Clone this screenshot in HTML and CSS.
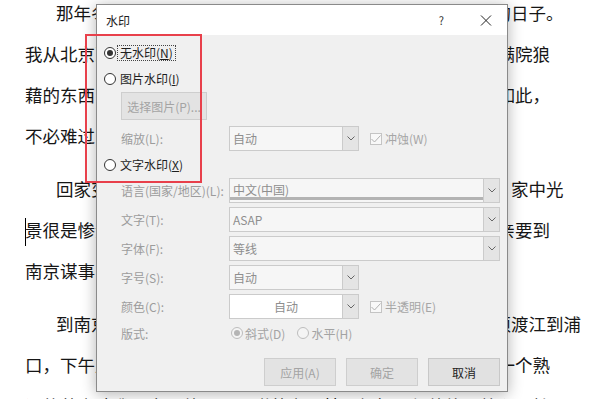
FILE: index.html
```html
<!DOCTYPE html>
<html lang="zh-CN">
<head>
<meta charset="utf-8">
<title>水印</title>
<link rel="stylesheet" href="styles.css">
</head>
<body>
<div class="doc">
  <div class="para">
    <div class="line indent">那年冬天，祖母死了，父亲的差使交卸了，正是祸不单行的日子。</div>
    <div class="line">我从北京到徐州，打算跟着父亲奔丧回家。到徐州见父亲，看满院狼</div>
    <div class="line">藉的东西，又想起祖母，不禁簌簌地流下眼泪。父亲说：事已如此，</div>
    <div class="line">不必难过，好在天无绝人之路！</div>
  </div>
  <div class="para">
    <div class="line indent">回家变卖典质，父亲还亏空；又借钱办了丧事。这些日子，家中光</div>
    <div class="line"><span class="cursor"></span>景很是惨淡，一半为了丧事，一半为父亲赋闲。丧事完毕，父亲要到</div>
    <div class="line">南京谋事，我也要回北京念书，我们便同行。</div>
  </div>
  <div class="para">
    <div class="line indent">到南京时，有朋友约去游逛，勾留了一日；第二日上午便须渡江到浦</div>
    <div class="line">口，下午上车北去。父亲因为事忙，本已说定不送我，叫旅馆一个熟</div>
    <div class="line">识的茶房陪我同去。他再三嘱咐茶房，甚是仔细。但他终不放心，怕</div>
  </div>
</div>

<div class="dialog">
  <div class="titlebar">
    <span class="title">水印</span>
    <span class="help">?</span>
    <span class="close"><svg width="12" height="11" viewBox="0 0 12 11"><path d="M1 0.5 L11 10.5 M11 0.5 L1 10.5" stroke="#222" stroke-width="1" fill="none"/></svg></span>
  </div>
  <div class="dbody">
    <div class="opt"><span class="radio on"></span><span class="txt focus">无水印(<u>N</u>)</span></div>
    <div class="opt"><span class="radio"></span><span class="txt">图片水印(<u>I</u>)</span></div>
    <div class="sub"><div class="btn pic">选择图片(P)...</div></div>
    <div class="row sub scale">
      <span class="lbl">缩放(L):</span>
      <div class="combo short"><span class="val">自动</span><span class="arrow"><svg width="8" height="5" viewBox="0 0 8 5"><path d="M0.5 0.5 L4 4 L7.5 0.5" stroke="#666" fill="none"/></svg></span></div>
      <span class="chk"><span class="box"><svg width="10" height="8" viewBox="0 0 10 8"><path d="M0.5 4 L3.5 7 L9.5 0.5" stroke="#b0b0b0" fill="none"/></svg></span>冲蚀(W)</span>
    </div>
    <div class="opt opt3"><span class="radio"></span><span class="txt">文字水印(<u>X</u>)</span></div>
    <div class="fields sub">
      <div class="row">
        <span class="lbl">语言(国家/地区)(L):</span>
        <div class="combo long"><span class="val bar">中文(中国)</span><span class="arrow"><svg width="8" height="5" viewBox="0 0 8 5"><path d="M0.5 0.5 L4 4 L7.5 0.5" stroke="#666" fill="none"/></svg></span></div>
      </div>
      <div class="row">
        <span class="lbl">文字(T):</span>
        <div class="combo long"><span class="val">ASAP</span><span class="arrow"><svg width="8" height="5" viewBox="0 0 8 5"><path d="M0.5 0.5 L4 4 L7.5 0.5" stroke="#666" fill="none"/></svg></span></div>
      </div>
      <div class="row">
        <span class="lbl">字体(F):</span>
        <div class="combo long"><span class="val">等线</span><span class="arrow"><svg width="8" height="5" viewBox="0 0 8 5"><path d="M0.5 0.5 L4 4 L7.5 0.5" stroke="#666" fill="none"/></svg></span></div>
      </div>
      <div class="row">
        <span class="lbl">字号(S):</span>
        <div class="combo short"><span class="val">自动</span><span class="arrow"><svg width="8" height="5" viewBox="0 0 8 5"><path d="M0.5 0.5 L4 4 L7.5 0.5" stroke="#666" fill="none"/></svg></span></div>
      </div>
      <div class="row">
        <span class="lbl">颜色(C):</span>
        <div class="combo short white"><span class="val center">自动</span><span class="arrow"><svg width="8" height="5" viewBox="0 0 8 5"><path d="M0.5 0.5 L4 4 L7.5 0.5" stroke="#666" fill="none"/></svg></span></div>
        <span class="chk"><span class="box"><svg width="10" height="8" viewBox="0 0 10 8"><path d="M0.5 4 L3.5 7 L9.5 0.5" stroke="#b0b0b0" fill="none"/></svg></span>半透明(E)</span>
      </div>
      <div class="row layout">
        <span class="lbl">版式:</span>
        <span class="radio dis on"></span><span class="rtxt">斜式(D)</span>
        <span class="radio dis second"></span><span class="rtxt">水平(H)</span>
      </div>
    </div>
    <div class="buttons">
      <div class="btn">应用(A)</div>
      <div class="btn">确定</div>
      <div class="btn primary">取消</div>
    </div>
  </div>
</div>
<div class="mark"></div>
</body>
</html>
```

FILE: styles.css
```css
* { box-sizing: border-box; }
html, body { margin: 0; padding: 0; }
body {
  width: 600px;
  height: 399px;
  overflow: hidden;
  background: #fff;
  position: relative;
  font-family: "Noto Sans CJK SC", "Noto Sans", sans-serif;
}

/* document text behind the dialog */
.doc {
  padding-left: 25px;
  margin-top: -8.5px;
  font-size: 17.5px;
  line-height: 41px;
  color: #161616;
}
.line { white-space: nowrap; }
.indent { padding-left: 31px; }
.para + .para { margin-top: 12px; }
.cursor {
  display: inline-block;
  width: 1px;
  height: 28px;
  background: #000;
  vertical-align: middle;
  margin-right: -1px;
}

/* dialog */
.dialog {
  position: absolute;
  left: 96px;
  top: 4px;
  width: 412px;
  height: 388px;
  border: 1px solid #8a8a8a;
  background: #f0f0f0;
  box-shadow: 0 2px 14px rgba(0, 0, 0, 0.3);
  font-size: 12px;
  color: #1e1e1e;
  display: flex;
  flex-direction: column;
}
.titlebar {
  height: 30px;
  background: #fff;
  display: flex;
  align-items: center;
  padding-left: 9px;
}
.title { flex: 1; color: #1e1e1e; }
.help { font-size: 11px; margin-right: 36px; color: #333; }
.close { width: 12px; height: 11px; margin-right: 15px; display: flex; }

.dbody {
  flex: 1;
  padding: 5px 7px 0;
  display: flex;
  flex-direction: column;
}
.opt {
  height: 26px;
  display: flex;
  align-items: center;
  gap: 1px;
}
.opt3 { margin-top: 1px; }
.radio {
  width: 12px;
  height: 12px;
  border: 1px solid #333;
  border-radius: 50%;
  background: #fff;
  display: flex;
  align-items: center;
  justify-content: center;
  flex: none;
}
.radio.on::after {
  content: "";
  width: 6px;
  height: 6px;
  border-radius: 50%;
  background: #333;
}
.radio.dis { border-color: #bdbdbd; background: #f4f4f4; margin-left: 2px; }
.radio.dis.on::after { background: #b5b5b5; }
.radio.dis.second { margin-left: 12px; }
.rtxt { color: #a3a3a3; margin-left: 2px; }
.txt {
  padding: 0 2px;
  border: 1px dotted transparent;
  line-height: 14px;
}
.txt.focus { border-color: #444; }
.sub { margin-left: 17px; }

.btn {
  height: 28px;
  border: 1px solid #cecece;
  background: #e3e3e3;
  color: #a4a4a4;
  display: flex;
  align-items: center;
  justify-content: center;
}
.pic { width: 86px; }
.btn.primary { color: #1e1e1e; background: #e1e1e1; border-color: #c8c8c8; }

.row {
  display: flex;
  align-items: center;
  height: 25px;
}
.scale { margin-top: 6px; }
.lbl { width: 108px; color: #9c9c9c; flex: none; }
.combo {
  height: 25px;
  border: 1px solid #cbcbcb;
  background: #f6f6f6;
  display: flex;
  color: #8e8e8e;
  flex: none;
}
.combo.short { width: 130px; }
.combo.long { width: 271px; }
.combo.white { background: #fff; }
.val {
  flex: 1;
  display: flex;
  align-items: center;
  padding-left: 3px;
}
.val.center { justify-content: center; padding-left: 0; }
.val.bar { border-bottom: 3px solid #b3b3b3; margin-bottom: 2px; padding-top: 2px; }
.arrow {
  width: 16px;
  border-left: 1px solid #cbcbcb;
  background: #e4e4e4;
  display: flex;
  align-items: center;
  justify-content: center;
}
.chk {
  display: flex;
  align-items: center;
  gap: 3px;
  margin-left: 11px;
  color: #a6a6a6;
}
.box {
  width: 12px;
  height: 12px;
  border: 1px solid #c4c4c4;
  background: #f8f8f8;
  display: flex;
  align-items: center;
  justify-content: center;
}
.fields {
  display: flex;
  flex-direction: column;
  gap: 4px;
}
.row.layout { height: 20px; margin-top: 0; }
.buttons {
  display: flex;
  justify-content: flex-end;
  gap: 10px;
  margin-top: 15px;
}
.buttons .btn { width: 72px; }

/* red annotation box */
.mark {
  position: absolute;
  left: 85px;
  top: 34px;
  width: 117px;
  height: 149px;
  border: 2px solid #e8404b;
}
```
